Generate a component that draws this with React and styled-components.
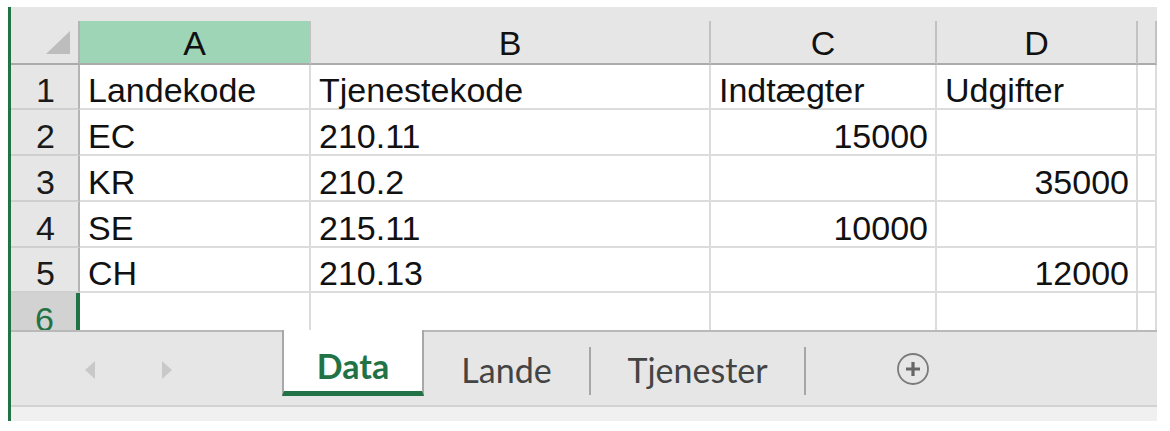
import React from "react";
import styled, { createGlobalStyle } from "styled-components";

const GlobalStyle = createGlobalStyle`
  html, body {
    margin: 0;
    padding: 0;
    background: #ffffff;
  }
  * {
    box-sizing: border-box;
  }
`;

const GREEN = "#217346";
const COLS = [69, 231, 400, 226, 201, 19];
const ROWS = [44, 45, 46, 46, 46, 45, 46];

const Page = styled.div`
  width: 1170px;
  height: 431px;
  padding-top: 7px;
  overflow: hidden;
`;

const Window = styled.div`
  width: 1149px;
  margin-left: 8px;
  border-left: 3px solid ${GREEN};
  display: flex;
  flex-direction: column;
`;

const TopBand = styled.div`
  height: 14px;
  background: #e6e6e6;
`;

const Sheet = styled.div`
  display: grid;
  grid-template-columns: ${COLS.map((c) => c + "px").join(" ")};
  grid-template-rows: ${ROWS.map((r) => r + "px").join(" ")};
  height: 309px;
  overflow: hidden;
  font-family: "Liberation Sans", Arial, sans-serif;
  font-size: 34px;
  color: #111;
`;

const Corner = styled.div`
  position: relative;
  background: #e6e6e6;
  border-right: 2px solid #b4b4b4;
  border-bottom: 2px solid #ababab;

  &::after {
    content: "";
    position: absolute;
    right: 8px;
    bottom: 9px;
    width: 0;
    height: 0;
    border-left: 24px solid transparent;
    border-bottom: 23px solid #bdbdbd;
  }
`;

const ColHead = styled.div`
  display: flex;
  align-items: center;
  justify-content: center;
  background: ${({ $selected }) => ($selected ? "#9fd5b7" : "#e6e6e6")};
  border-right: 2px solid #c2c2c2;
  border-bottom: 2px solid #ababab;
  line-height: 36px;
  padding-top: 2px;
`;

const RowHead = styled.div`
  display: flex;
  align-items: flex-end;
  justify-content: center;
  background: ${({ $selected }) => ($selected ? "#d2d2d2" : "#e6e6e6")};
  color: ${({ $selected }) => ($selected ? GREEN : "#1a1a1a")};
  border-right: ${({ $selected }) =>
    $selected ? `4px solid ${GREEN}` : "2px solid #b4b4b4"};
  border-bottom: 2px solid #cfcfcf;
  line-height: 36px;
  padding-left: 2px;
`;

const Cell = styled.div`
  display: flex;
  align-items: flex-end;
  justify-content: ${({ $right }) => ($right ? "flex-end" : "flex-start")};
  background: #ffffff;
  border-right: 2px solid #dcdcdc;
  border-bottom: 2px solid #dcdcdc;
  padding: 0 7px 0 8px;
  line-height: 36px;
  white-space: nowrap;
`;

const TabBar = styled.div`
  height: 75px;
  display: flex;
  background: #e6e6e6;
  border-top: 2px solid #b9b9b9;
  font-family: Lato, "Open Sans", sans-serif;
  font-size: 34px;
`;

const Nav = styled.div`
  width: 271px;
  display: flex;
  align-items: center;
  gap: 67px;
  padding-left: 74px;
  padding-top: 2px;
`;

const Arrow = styled.span`
  width: 0;
  height: 0;
  border-top: 9px solid transparent;
  border-bottom: 9px solid transparent;
  ${({ $dir }) =>
    $dir === "left"
      ? "border-right: 10px solid #c8c8c8;"
      : "border-left: 10px solid #c8c8c8;"}
`;

const Tab = styled.div`
  width: ${({ $w }) => $w}px;
  height: ${({ $active }) => ($active ? 66 : 64)}px;
  margin-top: ${({ $active }) => ($active ? -2 : 0)}px;
  display: flex;
  align-items: center;
  justify-content: center;
  padding-top: 10px;
  color: ${({ $active }) => ($active ? GREEN : "#444")};
  font-weight: ${({ $active }) => ($active ? 700 : 400)};
  background: ${({ $active }) => ($active ? "#ffffff" : "transparent")};
  border-left: ${({ $active }) => ($active ? "2px solid #a8a8a8" : "none")};
  border-right: ${({ $active }) => ($active ? "2px solid #a8a8a8" : "none")};
  border-bottom: ${({ $active }) =>
    $active ? `5px solid ${GREEN}` : "none"};
`;

const Separator = styled.span`
  width: 2px;
  height: 48px;
  align-self: center;
  margin-top: 4px;
  background: #a6a6a6;
`;

const AddButton = styled.div`
  margin-left: 90px;
  align-self: center;
  margin-top: 1px;
  display: flex;
`;

const StatusStrip = styled.div`
  height: 16px;
  background: #f0f0f0;
  border-top: 2px solid #d2d2d2;
`;

const headers = ["A", "B", "C", "D", ""];

const rows = [
  ["Landekode", "Tjenestekode", "Indtægter", "Udgifter"],
  ["EC", "210.11", "15000", ""],
  ["KR", "210.2", "", "35000"],
  ["SE", "215.11", "10000", ""],
  ["CH", "210.13", "", "12000"],
  ["", "", "", ""],
];

const isNumber = (v) => /^\d+$/.test(v);

const PlusIcon = () => (
  <svg width="34" height="34" viewBox="0 0 34 34">
    <circle cx="17" cy="17" r="15" fill="none" stroke="#7b7b7b" strokeWidth="1.8" />
    <path d="M17 10v14M10 17h14" stroke="#666" strokeWidth="3.2" />
  </svg>
);

export default function App() {
  return (
    <Page>
      <GlobalStyle />
      <Window>
        <TopBand />
        <Sheet>
          <Corner />
          {headers.map((h, i) => (
            <ColHead key={"h" + i} $selected={h === "A"}>
              {h}
            </ColHead>
          ))}
          {rows.map((row, r) => (
            <React.Fragment key={r}>
              <RowHead $selected={r === 5}>{r + 1}</RowHead>
              {row.map((v, c) => (
                <Cell key={c} $right={isNumber(v)}>
                  {v}
                </Cell>
              ))}
              <Cell />
            </React.Fragment>
          ))}
        </Sheet>
        <TabBar>
          <Nav>
            <Arrow $dir="left" />
            <Arrow $dir="right" />
          </Nav>
          <Tab $active $w={142}>
            Data
          </Tab>
          <Tab $w={165}>Lande</Tab>
          <Separator />
          <Tab $w={213}>Tjenester</Tab>
          <Separator />
          <AddButton>
            <PlusIcon />
          </AddButton>
        </TabBar>
        <StatusStrip />
      </Window>
    </Page>
  );
}
